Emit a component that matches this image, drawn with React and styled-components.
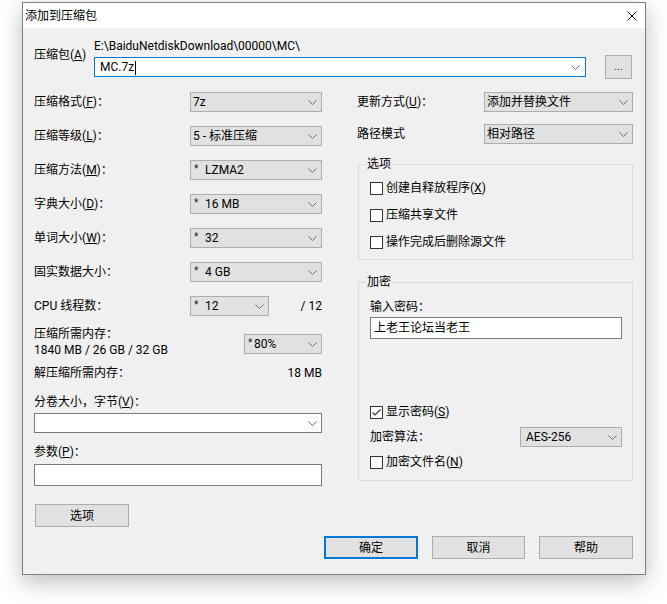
import React from "react";
import styled, { createGlobalStyle } from "styled-components";

const GlobalStyle = createGlobalStyle`
  html, body { margin: 0; padding: 0; background: #fff; }
  body {
    font-family: Roboto, "Noto Sans CJK SC", sans-serif;
    font-size: 12px;
    line-height: 16px;
    color: #000;
  }
  u { text-decoration-thickness: 1px; text-underline-offset: 1px; }
`;

const Page = styled.div`
  width: 667px;
  height: 604px;
  overflow: hidden;
  padding-top: 2px;
  box-sizing: border-box;
`;

const Dialog = styled.div`
  margin-left: 22px;
  width: 624px;
  height: 573px;
  box-sizing: border-box;
  border: 1px solid #7f7f7f;
  background: #f0f0f0;
  box-shadow: 0 7px 22px rgba(0, 0, 0, 0.26);
  display: flex;
  flex-direction: column;
`;

const TitleBar = styled.div`
  height: 25px;
  flex: none;
  background: #fff;
  display: flex;
  align-items: center;
  justify-content: space-between;
  padding: 0 8px 0 2px;
`;

const CloseIcon = () => (
  <svg width="10" height="10" viewBox="0 0 10 10">
    <path d="M0.5 0.5 L9.5 9.5 M9.5 0.5 L0.5 9.5" stroke="#111" strokeWidth="1" />
  </svg>
);

const Body = styled.div`
  flex: 1;
  padding: 10px 12px 0 11px;
  display: flex;
  flex-direction: column;
`;

const ArchiveRow = styled.div`
  display: flex;
  align-items: flex-start;
`;

const ArchiveLabel = styled.div`
  width: 60px;
  padding-top: 9px;
  flex: none;
`;

const ArchiveMid = styled.div`
  width: 492px;
  display: flex;
  flex-direction: column;
  gap: 3px;
`;

const PathText = styled.div`
  height: 16px;
`;

const BrowseButton = styled.div`
  width: 27px;
  height: 24px;
  margin: 17px 0 0 19px;
  box-sizing: border-box;
  background: #e1e1e1;
  border: 1px solid #adadad;
  display: flex;
  align-items: center;
  justify-content: center;
  font-size: 11px;
  color: #333;
`;

const Columns = styled.div`
  display: flex;
  align-items: flex-start;
  margin-top: 13px;
`;

const LeftCol = styled.div`
  width: 288px;
  display: flex;
  flex-direction: column;
`;

const RightCol = styled.div`
  width: 277px;
  margin-left: 35px;
  display: flex;
  flex-direction: column;
`;

const RowStack = styled.div`
  display: flex;
  flex-direction: column;
  gap: 14px;
`;

const Row = styled.div`
  display: flex;
  align-items: ${(p) => (p.$top ? "flex-start" : "center")};
  height: ${(p) => p.$h || 20}px;
  margin-top: ${(p) => p.$mt || 0}px;
`;

const Label = styled.div`
  width: ${(p) => p.$w}px;
  flex: none;
  white-space: nowrap;
`;

const Line = styled.div`
  height: 16px;
  margin-top: ${(p) => p.$mt || 0}px;
  white-space: nowrap;
`;

const RightText = styled.div`
  margin-left: auto;
  white-space: nowrap;
`;

const Select = styled.div`
  width: ${(p) => p.$w}px;
  height: 20px;
  flex: none;
  box-sizing: border-box;
  margin-top: ${(p) => p.$mt || 0}px;
  margin-left: ${(p) => (p.$right ? "auto" : "0")};
  background: ${(p) => (p.$white ? "#fff" : "#e1e1e1")};
  border: 1px solid ${(p) => (p.$focus ? "#0078d7" : p.$white ? "#7a7a7a" : "#adadad")};
  display: flex;
  align-items: center;
  padding-left: 2px;
`;

const SelectValue = styled.div`
  flex: 1;
  white-space: nowrap;
  overflow: hidden;
`;

const ArrowBox = styled.div`
  width: ${(p) => p.$w || 17}px;
  flex: none;
  display: flex;
  justify-content: center;
  align-items: center;
`;

const Caret = styled.span`
  display: inline-block;
  width: 1px;
  height: 14px;
  background: #000;
  vertical-align: middle;
  margin-left: 1px;
`;

const Star = styled.span`
  display: inline-block;
  width: ${(p) => p.$w || 11}px;
  font-size: 10px;
  position: relative;
  top: -2px;
  padding-left: 1px;
  color: #222;
`;

const Chevron = () => (
  <svg width="9" height="5" viewBox="0 0 9 5">
    <path d="M0.5 0.5 L4.5 4.5 L8.5 0.5" fill="none" stroke="#6d6d6d" strokeWidth="1" />
  </svg>
);

const TextField = styled.div`
  width: ${(p) => p.$w}px;
  height: 22px;
  box-sizing: border-box;
  margin-top: ${(p) => p.$mt || 0}px;
  background: #fff;
  border: 1px solid #7a7a7a;
  display: flex;
  align-items: center;
  padding-left: 3px;
`;

const Button = styled.div`
  width: ${(p) => p.$w || 94}px;
  height: 23px;
  box-sizing: border-box;
  margin-top: ${(p) => p.$mt || 0}px;
  margin-left: ${(p) => p.$ml || 0}px;
  background: #e1e1e1;
  border: ${(p) => (p.$default ? "2px solid #0078d7" : "1px solid #adadad")};
  display: flex;
  align-items: center;
  justify-content: center;
`;

const Group = styled.fieldset`
  margin: ${(p) => p.$mt}px 0 0 1px;
  padding: ${(p) => p.$pt}px 0 ${(p) => p.$pb}px 11px;
  border: 1px solid #dcdcdc;
  min-width: 0;
  display: flex;
  flex-direction: column;
`;

const Legend = styled.legend`
  padding: 0 1px;
  margin-left: -4px;
  line-height: 16px;
`;

const CheckRow = styled.div`
  display: flex;
  align-items: center;
  height: 16px;
  margin-top: ${(p) => p.$mt || 0}px;
`;

const Box = styled.div`
  width: 13px;
  height: 13px;
  box-sizing: border-box;
  border: 1px solid #333;
  background: #fff;
  margin-right: 3px;
  display: flex;
  align-items: center;
  justify-content: center;
`;

const Check = ({ checked, children, mt }) => (
  <CheckRow $mt={mt}>
    <Box>
      {checked && (
        <svg width="11" height="11" viewBox="0 0 11 11">
          <path d="M1.5 5.5 L4 8 L9.5 2.5" fill="none" stroke="#333" strokeWidth="1.1" />
        </svg>
      )}
    </Box>
    <span>{children}</span>
  </CheckRow>
);

const Footer = styled.div`
  display: flex;
  justify-content: flex-end;
  gap: 14px;
  margin-top: 9px;
`;

const Drop = ({ w, children, white, focus, right, mt, arrow }) => (
  <Select $w={w} $white={white} $focus={focus} $right={right} $mt={mt}>
    <SelectValue>{children}</SelectValue>
    <ArrowBox $w={arrow}>
      <Chevron />
    </ArrowBox>
  </Select>
);

const leftRows = [
  ["压缩格式", "F", "7z", false],
  ["压缩等级", "L", "5 - 标准压缩", false],
  ["压缩方法", "M", "LZMA2", true],
  ["字典大小", "D", "16 MB", true],
  ["单词大小", "W", "32", true],
];

export default function App() {
  return (
    <Page>
      <GlobalStyle />
      <Dialog>
        <TitleBar>
          <span>添加到压缩包</span>
          <CloseIcon />
        </TitleBar>
        <Body>
          <ArchiveRow>
            <ArchiveLabel>
              压缩包(<u>A</u>)
            </ArchiveLabel>
            <ArchiveMid>
              <PathText>E:\BaiduNetdiskDownload\00000\MC\</PathText>
              <Drop w={492} white focus arrow={20}>
                &nbsp;MC.7z
                <Caret />
              </Drop>
            </ArchiveMid>
            <BrowseButton>...</BrowseButton>
          </ArchiveRow>

          <Columns>
            <LeftCol>
              <RowStack>
                {leftRows.map(([name, key, value, star]) => (
                  <Row key={name}>
                    <Label $w={156}>
                      {name}(<u>{key}</u>)：
                    </Label>
                    <Drop w={132}>
                      {star && <Star>*</Star>}
                      {value}
                    </Drop>
                  </Row>
                ))}
                <Row>
                  <Label $w={156}>固实数据大小：</Label>
                  <Drop w={132}>
                    <Star>*</Star>4 GB
                  </Drop>
                </Row>
                <Row>
                  <Label $w={156}>CPU 线程数：</Label>
                  <Drop w={79}>
                    <Star>*</Star>12
                  </Drop>
                  <RightText>/ 12</RightText>
                </Row>
              </RowStack>

              <Row $h={30} $mt={10} $top>
                <div>
                  <Line>压缩所需内存：</Line>
                  <Line>1840 MB / 26 GB / 32 GB</Line>
                </div>
                <Drop w={78} right mt={8}>
                  <Star $w={6}>*</Star>80%
                </Drop>
              </Row>

              <Row $h={16} $mt={9}>
                <Label $w={150}>解压缩所需内存：</Label>
                <RightText>18 MB</RightText>
              </Row>

              <Line $mt={13}>
                分卷大小，字节(<u>V</u>)：
              </Line>
              <Drop w={288} white mt={3} />

              <Line $mt={11}>
                参数(<u>P</u>)：
              </Line>
              <TextField $w={288} $mt={4} />

              <Button $mt={18} $ml={1}>选项</Button>
            </LeftCol>

            <RightCol>
              <Row>
                <Label $w={127}>
                  更新方式(<u>U</u>)：
                </Label>
                <Drop w={149}>添加并替换文件</Drop>
              </Row>
              <Row $mt={12}>
                <Label $w={127}>路径模式</Label>
                <Drop w={149}>相对路径</Drop>
              </Row>

              <Group $mt={12} $pt={8} $pb={9}>
                <Legend>选项</Legend>
                <Check>
                  创建自释放程序(<u>X</u>)
                </Check>
                <Check mt={11}>压缩共享文件</Check>
                <Check mt={11}>操作完成后删除源文件</Check>
              </Group>

              <Group $mt={14} $pt={9} $pb={10}>
                <Legend>加密</Legend>
                <Line>输入密码：</Line>
                <TextField $w={252} $mt={2}>
                  上老王论坛当老王
                </TextField>
                <Check checked mt={65}>
                  显示密码(<u>S</u>)
                </Check>
                <Row $mt={7}>
                  <Label $w={150}>加密算法：</Label>
                  <Drop w={102}>&nbsp;AES-256</Drop>
                </Row>
                <Check mt={7}>
                  加密文件名(<u>N</u>)
                </Check>
              </Group>
            </RightCol>
          </Columns>

          <Footer>
            <Button $default>确定</Button>
            <Button $w={93}>取消</Button>
            <Button>帮助</Button>
          </Footer>
        </Body>
      </Dialog>
    </Page>
  );
}
